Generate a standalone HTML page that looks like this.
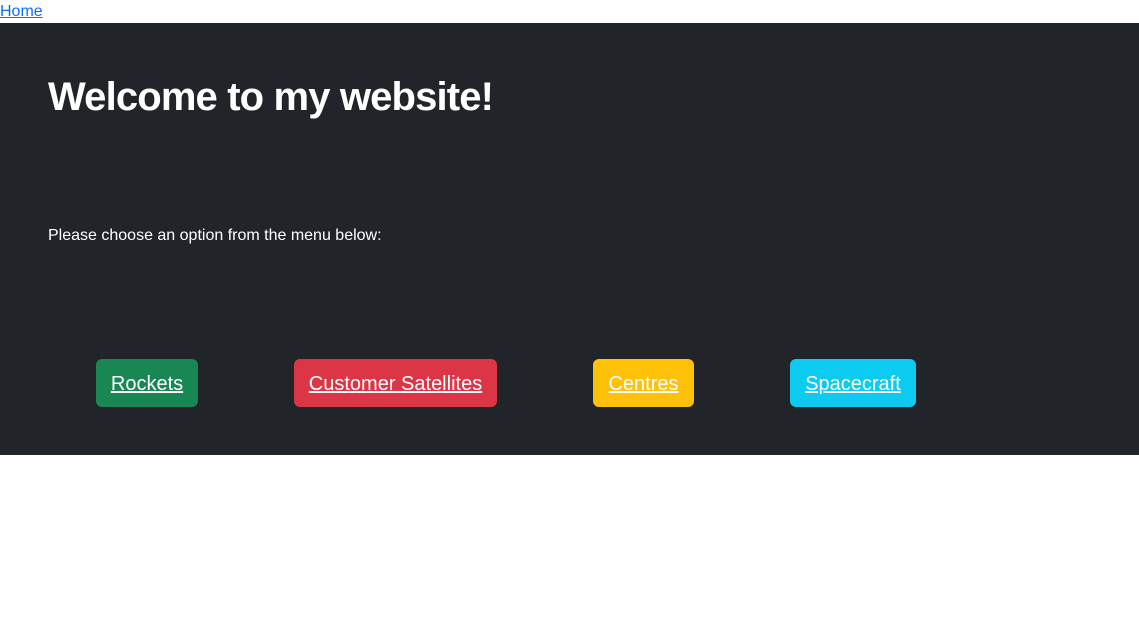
<!DOCTYPE html>
<html><head><style>
body{margin:0;font-family:"Liberation Sans",sans-serif;background:#fff;}
.top{height:23px;}
.top a{color:#0d6efd;font-size:16px;line-height:23px;}
.hero{background:#212529;height:432px;position:relative;color:#fff;}
h1{position:absolute;left:48px;top:52px;margin:0;font-size:40px;font-weight:600;letter-spacing:-0.85px;}
p{position:absolute;left:48px;top:204px;margin:0;font-size:16px;}
.btn{position:absolute;top:336px;height:46px;padding-top:2px;line-height:46px;border-radius:6px;color:#fff;text-decoration:underline;font-size:20px;text-align:center;}
</style></head><body>
<div class="top"><a href="#">Home</a></div>
<div class="hero">
<h1>Welcome to my website!</h1>
<p>Please choose an option from the menu below:</p>
<a class="btn" style="left:96px;width:102px;background:#198754">Rockets</a>
<a class="btn" style="left:294px;width:203px;background:#dc3545">Customer Satellites</a>
<a class="btn" style="left:593px;width:101px;background:#ffc107">Centres</a>
<a class="btn" style="left:790px;width:126px;background:#0dcaf0">Spacecraft</a>
</div>
</body></html>
